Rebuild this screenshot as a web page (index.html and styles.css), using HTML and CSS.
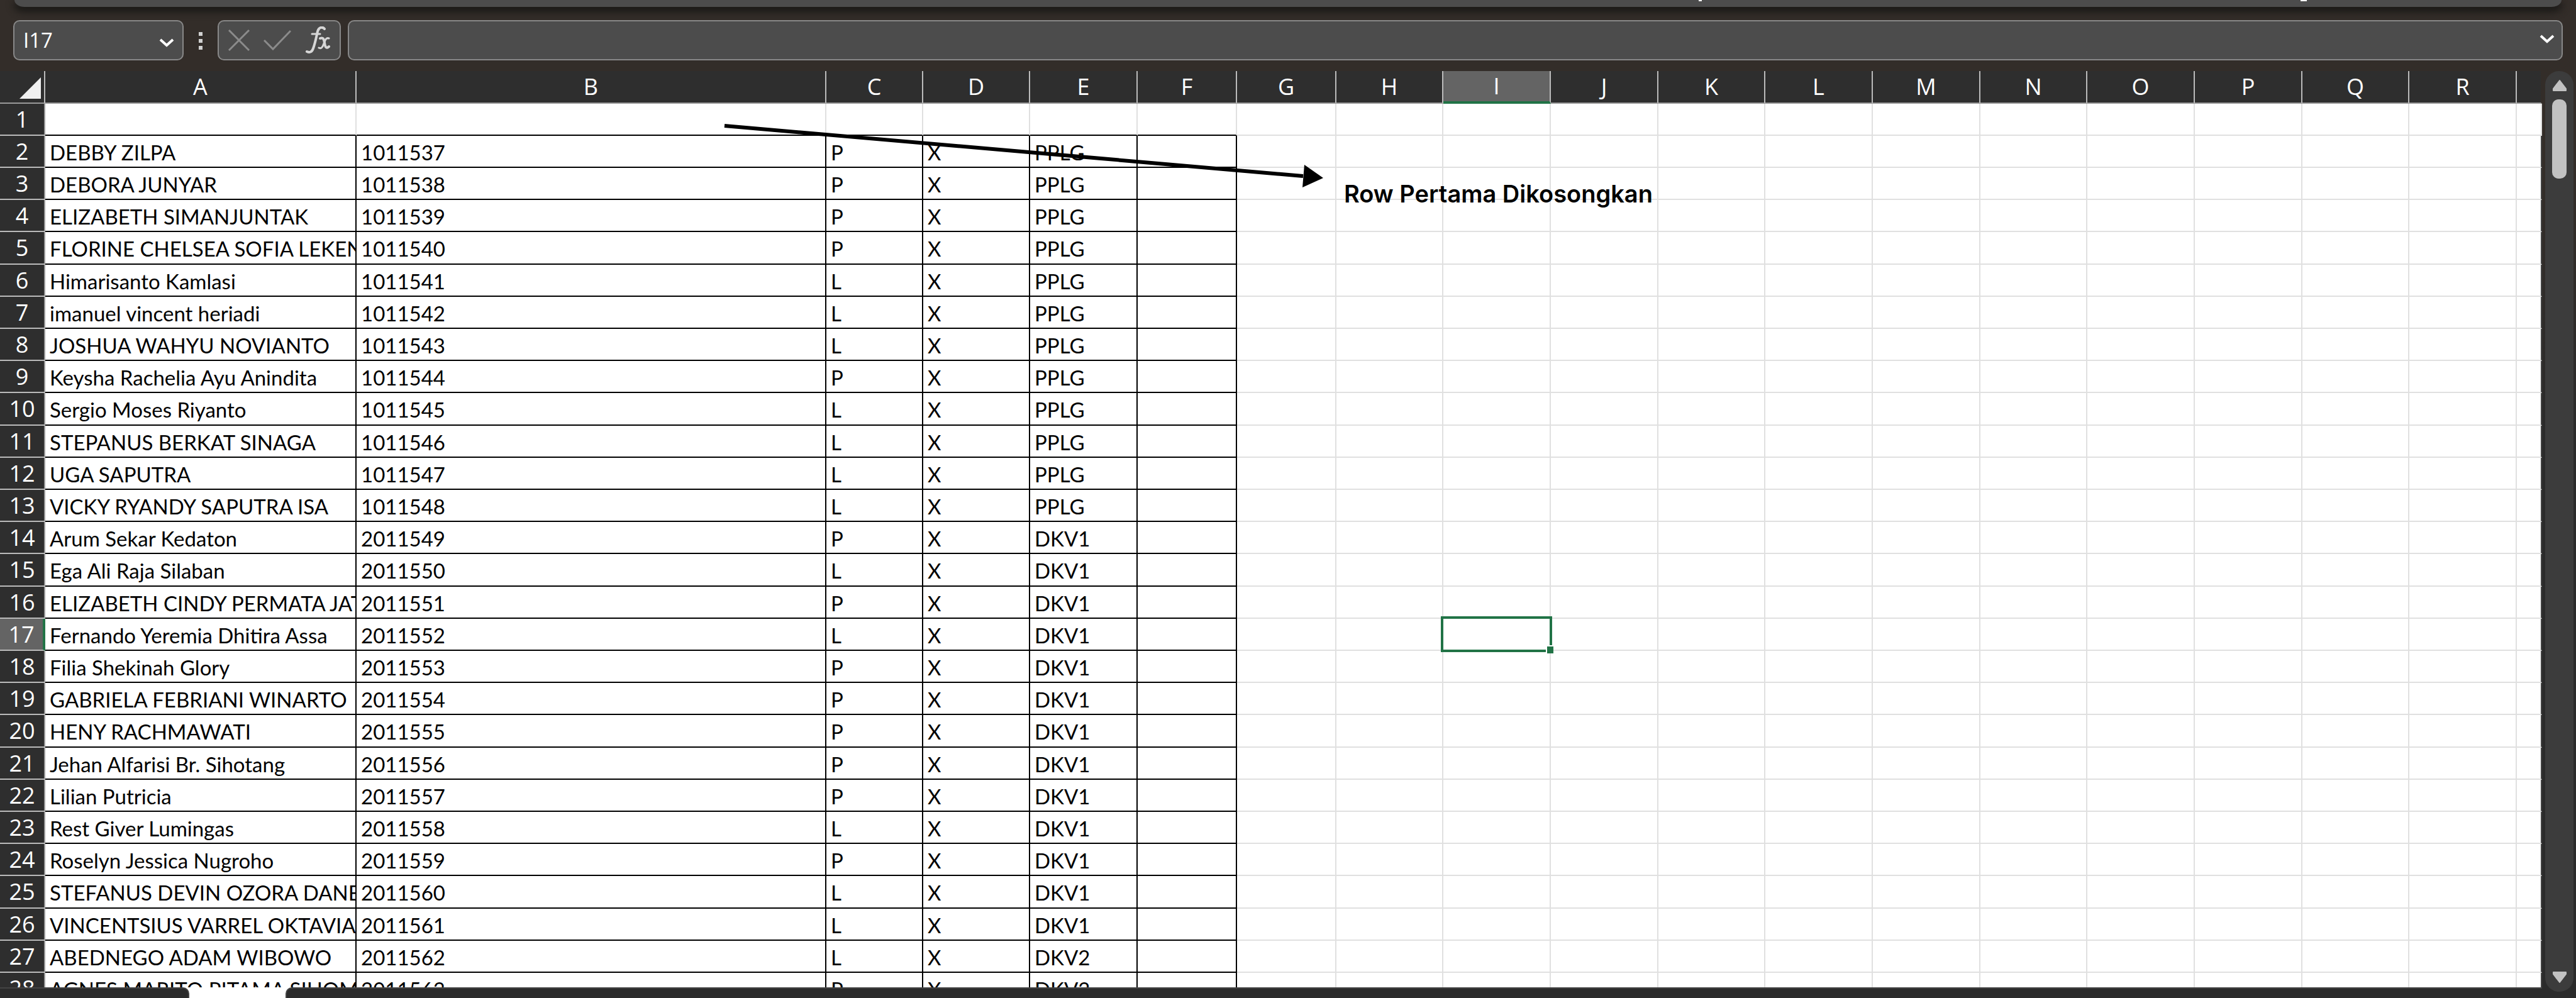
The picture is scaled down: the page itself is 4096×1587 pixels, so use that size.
FILE: index.html
```html
<!DOCTYPE html>
<html lang="id">
<head>
<meta charset="utf-8">
<title>Daftar Siswa</title>
<link rel="stylesheet" href="styles.css">
</head>
<body>
<header class="top">
  <div class="ribbon"><i class="tick"></i><i class="tick wide"></i></div>
  <div class="formula-row">
    <div class="box name-box">
      <input class="name-input" type="text" value="I17" aria-label="Name box">
      <button class="chev" type="button" aria-label="Show names"><svg width="24" height="14" viewBox="0 0 24 14"><path d="M2 2L12 11L22 2" fill="none" stroke="#fff" stroke-width="4"/></svg></button>
    </div>
    <div class="dots"><i></i><i></i><i></i></div>
    <div class="box fx-box">
      <button type="button" aria-label="Cancel"><svg width="34" height="34" viewBox="0 0 34 34"><path d="M1 1L33 33M33 1L1 33" fill="none" stroke="#8b8b8b" stroke-width="3"/></svg></button>
      <button type="button" aria-label="Enter"><svg width="44" height="34" viewBox="0 0 44 34"><path d="M1 17L15 31L43 2" fill="none" stroke="#8b8b8b" stroke-width="3"/></svg></button>
      <button type="button" aria-label="Insert function"><svg width="42" height="44" viewBox="0 0 42 44"><g fill="none" stroke="#d6d6d6" stroke-linecap="round"><path d="M31 4C28 0 22 1 20 8C18 17 16 27 13 35C11 41 7 42 3 40" stroke-width="4"/><path d="M11 12H24" stroke-width="3"/><path d="M24 19C29 17 30 20 31 26C32 33 34 36 38 32" stroke-width="4"/><path d="M38 19C33 17 32 23 30 27C28 33 26 36 22 34" stroke-width="3"/></g></svg></button>
    </div>
    <div class="box formula-box">
      <input class="formula-input" type="text" value="" aria-label="Formula">
      <button class="chev" type="button" aria-label="Expand formula bar"><svg width="24" height="14" viewBox="0 0 24 14"><path d="M2 2L12 11L22 2" fill="none" stroke="#fff" stroke-width="4"/></svg></button>
    </div>
  </div>
</header>
<main class="work">
  <div class="left">
    <div class="sheet">
      <table class="grid">
        <colgroup><col class="c-num"><col class="c-a"><col class="c-b"><col class="c-c"><col class="c-d"><col class="c-e"><col class="c-f"><col class="c-f"><col class="c-d"><col class="c-e"><col class="c-e"><col class="c-d"><col class="c-e"><col class="c-e"><col class="c-d"><col class="c-e"><col class="c-e"><col class="c-d"><col class="c-e"><col></colgroup>
        <thead>
          <tr><th class="corner"><svg width="34" height="34" viewBox="0 0 34 34"><path d="M34 0V34H0Z" fill="#f0f0f0"/></svg></th><th>A</th><th>B</th><th>C</th><th>D</th><th>E</th><th>F</th><th>G</th><th>H</th><th class="sel">I</th><th>J</th><th>K</th><th>L</th><th>M</th><th>N</th><th>O</th><th>P</th><th>Q</th><th>R</th><th></th></tr>
        </thead>
        <tbody>
          <tr class="first"><th>1<td><td><td><td><td><td><td><td><td><td><td><td><td><td><td><td><td><td><td></tr>
          <tr><th>2<td>DEBBY ZILPA<td>1011537<td>P<td>X<td>PPLG<td><td><td><td><td><td><td><td><td><td><td><td><td><td></tr>
          <tr><th>3<td>DEBORA JUNYAR<td>1011538<td>P<td>X<td>PPLG<td><td><td><td><td><td><td><td><td><td><td><td><td><td></tr>
          <tr><th>4<td>ELIZABETH SIMANJUNTAK<td>1011539<td>P<td>X<td>PPLG<td><td><td><td><td><td><td><td><td><td><td><td><td><td></tr>
          <tr><th>5<td>FLORINE CHELSEA SOFIA LEKEN<td>1011540<td>P<td>X<td>PPLG<td><td><td><td><td><td><td><td><td><td><td><td><td><td></tr>
          <tr><th>6<td>Himarisanto Kamlasi<td>1011541<td>L<td>X<td>PPLG<td><td><td><td><td><td><td><td><td><td><td><td><td><td></tr>
          <tr><th>7<td>imanuel vincent heriadi<td>1011542<td>L<td>X<td>PPLG<td><td><td><td><td><td><td><td><td><td><td><td><td><td></tr>
          <tr><th>8<td>JOSHUA WAHYU NOVIANTO<td>1011543<td>L<td>X<td>PPLG<td><td><td><td><td><td><td><td><td><td><td><td><td><td></tr>
          <tr><th>9<td>Keysha Rachelia Ayu Anindita<td>1011544<td>P<td>X<td>PPLG<td><td><td><td><td><td><td><td><td><td><td><td><td><td></tr>
          <tr><th>10<td>Sergio Moses Riyanto<td>1011545<td>L<td>X<td>PPLG<td><td><td><td><td><td><td><td><td><td><td><td><td><td></tr>
          <tr><th>11<td>STEPANUS BERKAT SINAGA<td>1011546<td>L<td>X<td>PPLG<td><td><td><td><td><td><td><td><td><td><td><td><td><td></tr>
          <tr><th>12<td>UGA SAPUTRA<td>1011547<td>L<td>X<td>PPLG<td><td><td><td><td><td><td><td><td><td><td><td><td><td></tr>
          <tr><th>13<td>VICKY RYANDY SAPUTRA ISA<td>1011548<td>L<td>X<td>PPLG<td><td><td><td><td><td><td><td><td><td><td><td><td><td></tr>
          <tr><th>14<td>Arum Sekar Kedaton<td>2011549<td>P<td>X<td>DKV1<td><td><td><td><td><td><td><td><td><td><td><td><td><td></tr>
          <tr><th>15<td>Ega Ali Raja Silaban<td>2011550<td>L<td>X<td>DKV1<td><td><td><td><td><td><td><td><td><td><td><td><td><td></tr>
          <tr><th>16<td>ELIZABETH CINDY PERMATA JAT<td>2011551<td>P<td>X<td>DKV1<td><td><td><td><td><td><td><td><td><td><td><td><td><td></tr>
          <tr><th class="sel">17<td>Fernando Yeremia Dhitira Assa<td>2011552<td>L<td>X<td>DKV1<td><td><td><td class="active"><span class="frame"></span><span class="handle"></span><td><td><td><td><td><td><td><td><td><td></tr>
          <tr><th>18<td>Filia Shekinah Glory<td>2011553<td>P<td>X<td>DKV1<td><td><td><td><td><td><td><td><td><td><td><td><td><td></tr>
          <tr><th>19<td>GABRIELA FEBRIANI WINARTO<td>2011554<td>P<td>X<td>DKV1<td><td><td><td><td><td><td><td><td><td><td><td><td><td></tr>
          <tr><th>20<td>HENY RACHMAWATI<td>2011555<td>P<td>X<td>DKV1<td><td><td><td><td><td><td><td><td><td><td><td><td><td></tr>
          <tr><th>21<td>Jehan Alfarisi Br. Sihotang<td>2011556<td>P<td>X<td>DKV1<td><td><td><td><td><td><td><td><td><td><td><td><td><td></tr>
          <tr><th>22<td>Lilian Putricia<td>2011557<td>P<td>X<td>DKV1<td><td><td><td><td><td><td><td><td><td><td><td><td><td></tr>
          <tr><th>23<td>Rest Giver Lumingas<td>2011558<td>L<td>X<td>DKV1<td><td><td><td><td><td><td><td><td><td><td><td><td><td></tr>
          <tr><th>24<td>Roselyn Jessica Nugroho<td>2011559<td>P<td>X<td>DKV1<td><td><td><td><td><td><td><td><td><td><td><td><td><td></tr>
          <tr><th>25<td>STEFANUS DEVIN OZORA DANE<td>2011560<td>L<td>X<td>DKV1<td><td><td><td><td><td><td><td><td><td><td><td><td><td></tr>
          <tr><th>26<td>VINCENTSIUS VARREL OKTAVIA<td>2011561<td>L<td>X<td>DKV1<td><td><td><td><td><td><td><td><td><td><td><td><td><td></tr>
          <tr><th>27<td>ABEDNEGO ADAM WIBOWO<td>2011562<td>L<td>X<td>DKV2<td><td><td><td><td><td><td><td><td><td><td><td><td><td></tr>
          <tr><th>28<td>AGNES MARITO PITAMA SIHOM<td>2011563<td>P<td>X<td>DKV2<td><td><td><td><td><td><td><td><td><td><td><td><td><td></tr>
        </tbody>
      </table>
      <svg class="arrow" width="960" height="110" viewBox="0 0 960 110"><path d="M5 7L925 87" fill="none" stroke="#000" stroke-width="6"/><path d="M957 90L927 69L924 105Z" fill="#000"/></svg>
      <p class="note">Row Pertama Dikosongkan</p>
    </div>
    <div class="tabs"><div class="tab-side before"></div><div class="tab"></div><div class="tab-side after"></div></div>
  </div>
  <div class="scroll">
    <button type="button" aria-label="Scroll up"><svg width="24" height="20" viewBox="0 0 24 20"><path d="M12 2L22 15V18H2V15Z" fill="#c2c2c2" stroke="#c2c2c2" stroke-width="2" stroke-linejoin="round"/></svg></button>
    <div class="thumb"></div>
    <button type="button" aria-label="Scroll down"><svg width="24" height="20" viewBox="0 0 24 20"><path d="M12 18L22 5V2H2V5Z" fill="#c2c2c2" stroke="#c2c2c2" stroke-width="2" stroke-linejoin="round"/></svg></button>
  </div>
</main>
</body>
</html>
```
FILE: styles.css
```css
* { box-sizing: border-box; }

body {
  margin: 0;
  height: 100vh;
  display: flex;
  flex-direction: column;
  overflow: hidden;
  background: linear-gradient(#332d29 0, #332d29 280px, #2b2b2b 700px);
  font-family: "Open Sans", "Noto Sans", sans-serif;
  color: #fff;
}

button {
  display: flex;
  padding: 0;
  border: 0;
  background: none;
}

input {
  min-width: 0;
  flex: 1;
  padding: 0;
  border: 0;
  outline: 0;
  background: none;
  color: #fff;
  font: 33px/40px "Open Sans", "Noto Sans", sans-serif;
}

/* Ribbon edge and formula bar */
.top {
  height: 113px;
  flex: none;
}

.ribbon {
  display: flex;
  height: 11px;
  margin: 0 23px;
  background: #4c4c4c;
  border-radius: 0 0 16px 16px / 0 0 11px 11px;
  box-shadow: 0 6px 12px 2px #1a1917;
}

.tick {
  width: 5px;
  height: 2px;
  margin-left: 2678px;
  background: #fff;
}

.tick.wide {
  width: 10px;
  margin-left: 952px;
}

.formula-row {
  display: flex;
  margin: 21px 21px 0;
  height: 64px;
}

.box {
  position: relative;
  display: flex;
  align-items: center;
  background: #4c4c4c;
  border: 2px solid #888;
  border-radius: 10px;
}

.name-box {
  width: 271px;
  padding: 0 13px 0 14px;
}

.chev { padding-top: 8px; }

.dots {
  display: flex;
  flex-direction: column;
  gap: 5px;
  padding: 19px 24px 0;
}

.dots i {
  width: 6px;
  height: 6px;
  background: #d0d0d0;
}

.fx-box {
  width: 196px;
  justify-content: space-between;
  padding: 0 13px 0 15px;
}

.formula-box {
  flex: 1;
  margin-left: 11px;
  padding: 0 11px 0 14px;
}

.formula-box .chev { padding: 0 0 4px; }

/* Sheet */
.work {
  display: flex;
  flex: 1;
  min-height: 0;
}

.left {
  display: flex;
  flex: 1;
  min-width: 0;
  flex-direction: column;
}

.sheet {
  position: relative;
  flex: 1;
  min-height: 0;
  overflow: hidden;
  background: #fff;
}

.grid {
  width: 100%;
  table-layout: fixed;
  border-collapse: separate;
  border-spacing: 0;
}

.c-num { width: 72px; }
.c-a { width: 495px; }
.c-b { width: 747px; }
.c-c { width: 154px; }
.c-d { width: 170px; }
.c-e { width: 171px; }
.c-f { width: 158px; }

.grid tr { height: 51px; }
.grid tbody tr:nth-child(5n) { height: 52px; }

.grid th {
  padding: 0;
  background: #2e2e2e;
  color: #fff;
  font-size: 36px;
  font-weight: 400;
  line-height: 48px;
  text-align: center;
}

.grid thead th {
  border-right: 2px solid #bbb;
  border-bottom: 2px solid #999;
}

.grid thead th:last-child { border-right-color: #332d29; }

.grid .corner svg {
  display: block;
  margin: 3px 5px 0 auto;
}

.grid tbody th {
  border-right: 2px solid #999;
  border-bottom: 2px solid #bbb;
}

.grid thead .sel {
  background: #646464;
  border-bottom: 4px solid #217346;
}

.grid tbody .sel {
  background: #646464;
  border-right: 4px solid #217346;
}

.grid td {
  padding: 2px 0 0 7px;
  overflow: hidden;
  border-right: 2px solid #e0e0e0;
  border-bottom: 2px solid #e0e0e0;
  color: #000;
  font: 33px/46px Lato, sans-serif;
  white-space: nowrap;
}

.grid td:nth-child(-n+7) {
  border-right-color: #000;
  border-bottom-color: #000;
}

.grid .first td:nth-child(n) { border-right-color: #e0e0e0; }
.grid td:last-child { border-right-color: #444; }

.grid .active {
  position: relative;
  overflow: visible;
}

.frame {
  position: absolute;
  inset: -4px;
  border: 4px solid #217346;
}

.handle {
  position: absolute;
  right: -6px;
  bottom: -6px;
  width: 12px;
  height: 13px;
  background: #217346;
  border-top: 2px solid #fff;
  border-left: 2px solid #fff;
}

.arrow {
  position: absolute;
  left: 1147px;
  top: 80px;
}

.note {
  position: absolute;
  left: 2137px;
  top: 171px;
  margin: 0;
  color: #000;
  font: 600 38px/48px Inter, sans-serif;
  white-space: nowrap;
}

/* Sheet tab strip */
.tabs {
  display: flex;
  height: 17px;
  flex: none;
  background: #fff;
}

.tab-side {
  background: #2b2b2b;
  border-top: 2px solid #444;
}

.before {
  width: 301px;
  border-right: 2px solid #444;
  border-top-right-radius: 10px;
}

.tab { width: 153px; }

.after {
  flex: 1;
  border-left: 2px solid #444;
  border-top-left-radius: 10px;
}

/* Scroll bar */
.scroll {
  display: flex;
  width: 45px;
  margin: 0 4px 10px 5px;
  padding: 13px 0;
  flex-direction: column;
  align-items: center;
  background: #3c3c3c;
  border-radius: 22px;
}

.thumb {
  width: 23px;
  height: 126px;
  margin: 12px 0 auto;
  background: #c2c2c2;
  border-radius: 10px;
}
```
